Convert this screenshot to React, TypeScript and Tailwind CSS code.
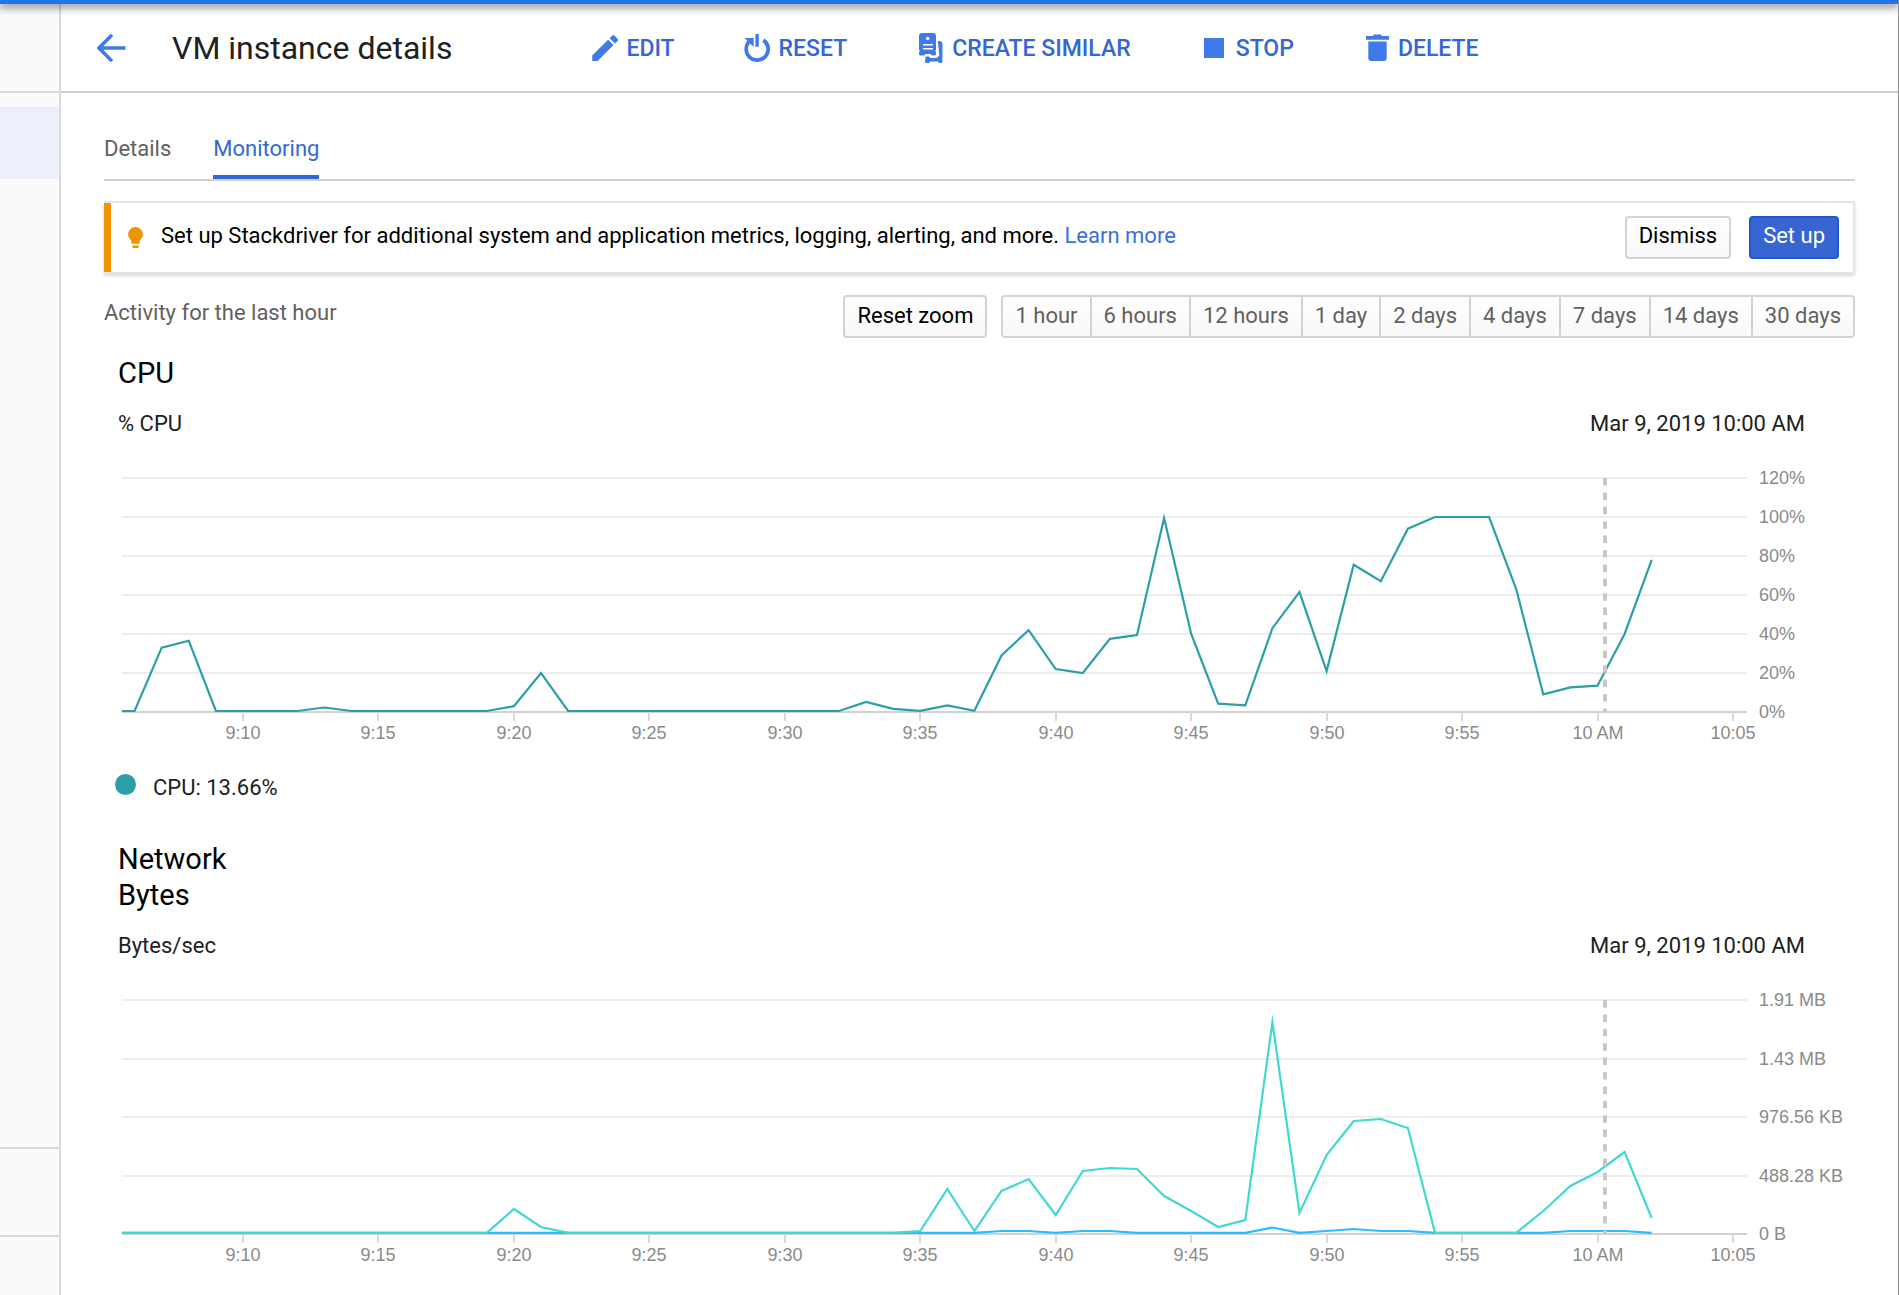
import type { ReactNode } from "react";

type Series = { color: string; points: [number, number][] };

/** [minute, value] anchors; minutes count from 9:00. */
const cpu: [number, number][] = [
  [5.53, 0.5], [6, 0.5], [7, 33], [8, 36.5], [9, 0.5], [12, 0.5], [13, 2.3], [14, 0.5], [19, 0.5],
  [20, 3], [21, 20], [22, 0.5], [32, 0.5], [33, 5.2], [34, 1.6], [35, 0.6], [36, 3.4], [37, 0.6],
  [38, 29], [39, 42], [40, 22], [41, 20], [42, 37.5], [43, 39.5], [44, 99.5], [45, 40], [46, 4.3],
  [47, 3.4], [48, 43], [49, 61.5], [50, 21], [51, 75.5], [52, 67], [53, 94], [54, 100], [56, 100],
  [57, 63], [58, 9], [59, 12.6], [60, 13.5], [61, 40], [62, 78],
];

const received: [number, number][] = [
  [5.53, 1.2], [19, 1.2], [20, 25], [21, 7], [22, 1.2], [34, 1.2], [35, 3], [36, 45], [37, 3], [38, 43],
  [39, 55], [40, 19], [41, 63], [42, 66], [43, 65], [44, 38], [45, 23], [46, 7], [47, 14], [48, 212],
  [49, 21], [50, 79], [51, 113], [52, 115], [53, 106], [54, 1.2], [57, 1.2], [58, 23], [59, 48],
  [60, 62], [61, 82], [62, 16],
];

const sent: [number, number][] = [
  [5.53, 1.2], [37, 1.2], [38, 3], [39, 3], [40, 1.2], [41, 3], [42, 3], [43, 1.2], [47, 1.2], [48, 6.5],
  [49, 1.2], [50, 3], [51, 5], [52, 3], [53, 3], [54, 1.2], [58, 1.2], [59, 3], [61, 3], [62, 1.2],
];

const times = ["9:10", "9:15", "9:20", "9:25", "9:30", "9:35", "9:40", "9:45", "9:50", "9:55", "10 AM", "10:05"];
const ranges = ["1 hour", "6 hours", "12 hours", "1 day", "2 days", "4 days", "7 days", "14 days", "30 days"];

const PLOT_TOP = 12;
const PLOT_HEIGHT = 234;
const BASE = PLOT_TOP + PLOT_HEIGHT;
const timeToX = (minute: number) => 125 + (minute - 10) * 27.09;

function Chart({ label, ticks, max, series }: { label: string; ticks: string[]; max: number; series: Series[] }) {
  const step = PLOT_HEIGHT / (ticks.length - 1);
  return (
    <svg viewBox="0 0 1737 280" className="block w-full overflow-visible" role="img" aria-label={label}>
      {ticks.map((t, i) => {
        const y = Math.round(PLOT_TOP + i * step);
        const last = i === ticks.length - 1;
        return (
          <g key={t}>
            <line x1="4" x2="1629" y1={y} y2={y} stroke={last ? "#d2d2d2" : "#ededed"} strokeWidth="2" />
            <text x="1641" y={y + 6} fontSize="18" fill="#8a8a8a" fontFamily="Liberation Sans, Arial, sans-serif">
              {t}
            </text>
          </g>
        );
      })}
      {times.map((t, i) => {
        const x = Math.round(timeToX(10 + i * 5));
        return (
          <g key={t}>
            <line x1={x} x2={x} y1={BASE} y2={BASE + 9} stroke="#d9d9d9" strokeWidth="2" />
            <text x={x} y={BASE + 27} fontSize="18" textAnchor="middle" fill="#8a8a8a" fontFamily="Liberation Sans, Arial, sans-serif">
              {t}
            </text>
          </g>
        );
      })}
      {series.map((s) => (
        <polyline
          key={s.color}
          fill="none"
          stroke={s.color}
          strokeWidth="2.2"
          strokeMiterlimit="10"
          points={s.points.map(([m, v]) => `${timeToX(m).toFixed(1)},${(BASE - (v / max) * PLOT_HEIGHT).toFixed(1)}`).join(" ")}
        />
      ))}
      <line x1="1487" x2="1487" y1={PLOT_TOP} y2={BASE} stroke="#c8c8c8" strokeWidth="4" strokeDasharray="7.5 6.9" />
    </svg>
  );
}

function ChartSection({ title, unit, children }: { title: ReactNode; unit: string; children: ReactNode }) {
  return (
    <section className="pl-[14px]">
      <h2 className="text-[29px] leading-9 text-black">{title}</h2>
      <div className="mt-[19px] mb-7 flex justify-between pr-[50px] text-[22px] leading-7 text-[#212121]">
        <span>{unit}</span>
        <span>Mar 9, 2019 10:00 AM</span>
      </div>
      {children}
    </section>
  );
}

function Action({ icon, children, className }: { icon: ReactNode; children: string; className: string }) {
  return (
    <button type="button" className={`flex items-center text-[23px] leading-7 font-medium text-[#3367d6] ${className}`}>
      {icon}
      <span className="pt-0.5">{children}</span>
    </button>
  );
}

function EditIcon() {
  return (
    <svg viewBox="3 2.9 17.8 18.1" className="h-[26px] w-[26px] fill-[#4079e8]" aria-hidden="true">
      <path d="M3 17.25V21h3.75L17.81 9.94l-3.75-3.75L3 17.25zM20.71 7.04a1 1 0 0 0 0-1.41l-2.34-2.34a1 1 0 0 0-1.41 0l-1.83 1.83 3.75 3.75 1.83-1.83z" />
    </svg>
  );
}

function ResetIcon() {
  return (
    <svg viewBox="0 0 26 28" className="h-7 w-[26px]" aria-hidden="true">
      <path d="M5.600 7.200A11 11 0 1 0 19.400 6.100" fill="none" stroke="#4079e8" strokeWidth="3.700" />
      <path d="M.5 4h9.200v9z" fill="#4079e8" />
      <path d="M11.400 0h3.400v12.800h-3.400z" fill="#4079e8" />
    </svg>
  );
}

function CreateSimilarIcon() {
  return (
    <svg viewBox="0 0 24 30" className="h-[30px] w-6 fill-[#4079e8]" aria-hidden="true">
      <path
        d="M3 0h11a3 3 0 0 1 3 3v14l-1 1 1 1v2.500l-1 1h-3l-1.500-1.500h-5L5 22.500H1l-1-1V19l1-1-1-1V3a3 3 0 0 1 3-3zm5.700 3.800a1.700 1.700 0 1 0 0 3.400 1.700 1.700 0 0 0 0-3.400zM4 11v1.400h10V11zm0 4v1.400h10V15z"
        fillRule="evenodd"
      />
      <path d="M18.800 8h1.200a3 3 0 0 1 3.500 3v13.500l-.5 1 .5 1V29l-1 1h-2.500l-1-1.500h-8l-1 1.500H7l-1-1v-2.500l1-1-1-1 1-1h3l1.500 1.500h6l1.800-1.500 1-1z" />
    </svg>
  );
}

function DeleteIcon() {
  return (
    <svg viewBox="0 0 23 27" className="h-[27px] w-[23px] fill-[#4079e8]" aria-hidden="true">
      <path d="M2.300 7.500h18.400V24a3 3 0 0 1-3 3H5.300a3 3 0 0 1-3-3zM0 2h7l1-1.500h7L16 2h7v3.700H0z" />
    </svg>
  );
}

export default function App() {
  return (
    <div className="flex min-h-screen flex-col overflow-hidden border-r border-[#8f8f8f] bg-white font-[Roboto,sans-serif]">
      <div className="relative z-10 h-1 shrink-0 bg-[#2374e9] shadow-[0_2px_8px_1px_rgba(0,0,0,0.55)]" />
      <div className="flex grow">
        <aside className="flex w-[61px] shrink-0 flex-col border-r-2 border-[#dadada] bg-[#fafafa]">
          <div className="h-[89px] border-b-2 border-[#dadada]" />
          <div className="mt-[14px] h-[72px] bg-[#ebf0fa]" />
          <div className="grow" />
          <div className="h-[90px] border-y-2 border-[#dadada]" />
          <div className="h-[58px]" />
        </aside>

        <div className="min-w-0 grow">
          <header className="flex h-[89px] items-center border-b-2 border-[#d0d0d0] pl-9">
            <button type="button" aria-label="Back">
              <svg viewBox="4 4 16 16" className="h-7 w-[29px]" aria-hidden="true">
                <path d="M12.300 4.500 4.900 12l7.400 7.500M5 12h15" fill="none" stroke="#4079e8" strokeWidth="2" />
              </svg>
            </button>
            <h1 className="ml-[46px] text-[32px] leading-10 text-[#212121]">VM instance details</h1>
            <Action className="ml-[140px]" icon={<span className="mr-2"><EditIcon /></span>}>EDIT</Action>
            <Action className="ml-[69px]" icon={<span className="mr-[9px]"><ResetIcon /></span>}>RESET</Action>
            <Action className="ml-[72px]" icon={<span className="mr-[9px]"><CreateSimilarIcon /></span>}>CREATE SIMILAR</Action>
            <Action className="ml-[73px]" icon={<span className="mr-3 h-5 w-5 bg-[#4079e8]" />}>STOP</Action>
            <Action className="ml-[72px]" icon={<span className="mr-[9px]"><DeleteIcon /></span>}>DELETE</Action>
          </header>

          <main className="pr-[43px] pl-[43px]">
            <nav className="mt-10 flex h-12 gap-[42px] border-b-2 border-[#d0d0d0] text-[22px] leading-7">
              <a href="#details" className="pt-0.5 text-[#616161]">Details</a>
              <a href="#monitoring" className="border-b-4 border-[#3367d6] pt-0.5 text-[#3367d6]">Monitoring</a>
            </nav>

            <div className="mt-5 border-2 border-l-0 border-[#e5e5e5] shadow-[0_2px_3px_rgba(0,0,0,0.15)]">
              <div className="flex h-[69px] items-center border-l-[7px] border-[#f09300] pr-[14px] pl-[17px]">
                <svg viewBox="5 2 14 20" className="h-[21px] w-[15px] fill-[#f09300]" aria-hidden="true">
                  <path d="M9 21c0 .55.45 1 1 1h4c.55 0 1-.45 1-1v-1.500H9V21zM12 2C8.140 2 5 5.140 5 9c0 2.380 1.190 4.470 3 5.740V17c0 .55.45 1 1 1h6c.55 0 1-.45 1-1v-2.260c1.810-1.270 3-3.360 3-5.740 0-3.860-3.140-7-7-7z" />
                </svg>
                <p className="ml-[18px] grow pb-1 text-[22px] leading-7 text-black">
                  Set up Stackdriver for additional system and application metrics, logging, alerting, and more.{" "}
                  <a href="#learn" className="text-[#3b6fdc]">Learn more</a>
                </p>
                <button type="button" className="h-[43px] rounded border-2 border-[#d3d3d3] bg-linear-to-b from-white to-[#f8f8f8] px-3 pb-1 text-[22px] leading-7 text-black">
                  Dismiss
                </button>
                <button type="button" className="ml-[18px] h-[43px] rounded border-2 border-[#2059cf] bg-[#3766d3] px-3 pb-1 text-[22px] leading-7 text-white">
                  Set up
                </button>
              </div>
            </div>

            <div className="mt-[21px] flex justify-between text-[22px] leading-7">
              <p className="mt-1 text-[#616161]">Activity for the last hour</p>
              <div className="flex">
                <button type="button" className="mr-[14px] h-[43px] rounded border-2 border-[#d3d3d3] bg-linear-to-b from-white to-[#f8f8f8] px-3 pb-0.5 text-black">
                  Reset zoom
                </button>
                <div className="flex h-[43px] divide-x-2 divide-[#d3d3d3] rounded border-2 border-[#d3d3d3] bg-linear-to-b from-white to-[#f8f8f8]">
                  {ranges.map((r) => (
                    <button key={r} type="button" className="px-3 pb-0.5 text-[#616161]">{r}</button>
                  ))}
                </div>
              </div>
            </div>

            <div className="mt-[17px]">
              <ChartSection title="CPU" unit="% CPU">
                <Chart
                  label="CPU utilisation"
                  max={120}
                  ticks={["120%", "100%", "80%", "60%", "40%", "20%", "0%"]}
                  series={[{ color: "#2c9fa6", points: cpu }]}
                />
              </ChartSection>
              <div className="mt-5 flex items-center pl-[11px]">
                <span className="h-[21px] w-[21px] rounded-full bg-[#2c9fa6]" />
                <span className="ml-[17px] pt-2 text-[22px] leading-7 text-[#212121]">CPU: 13.66%</span>
              </div>
            </div>

            <div className="mt-[39px]">
              <ChartSection title={<>Network<br />Bytes</>} unit="Bytes/sec">
                <Chart
                  label="Network bytes per second"
                  max={234}
                  ticks={["1.91 MB", "1.43 MB", "976.56 KB", "488.28 KB", "0 B"]}
                  series={[
                    { color: "#2bbbff", points: sent },
                    { color: "#40d9d1", points: received },
                  ]}
                />
              </ChartSection>
            </div>
          </main>
        </div>
      </div>
    </div>
  );
}
